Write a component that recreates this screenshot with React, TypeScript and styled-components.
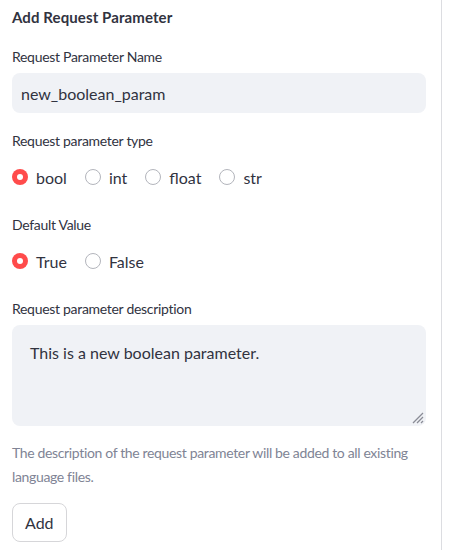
import styled, { createGlobalStyle } from 'styled-components';

const GlobalStyle = createGlobalStyle`
  html, body {
    margin: 0;
    padding: 0;
    background: #ffffff;
  }
  body {
    font-family: Lato, "Noto Sans", "Liberation Sans", sans-serif;
    color: #31333f;
  }
`;

interface RadioOption {
  label: string;
  checked?: boolean;
}

const typeOptions: RadioOption[] = [
  { label: 'bool', checked: true },
  { label: 'int' },
  { label: 'float' },
  { label: 'str' },
];

const defaultOptions: RadioOption[] = [{ label: 'True', checked: true }, { label: 'False' }];

function RadioGroup({ options }: { options: RadioOption[] }) {
  return (
    <RadioRow>
      {options.map((option) => (
        <RadioItem key={option.label}>
          <RadioDot checked={!!option.checked} />
          <span>{option.label}</span>
        </RadioItem>
      ))}
    </RadioRow>
  );
}

export default function App() {
  return (
    <>
      <GlobalStyle />
      <Panel>
        <Title>Add Request Parameter</Title>

        <Label $top={18}>Request Parameter Name</Label>
        <TextInput>new_boolean_param</TextInput>

        <Label $top={18}>Request parameter type</Label>
        <RadioGroup options={typeOptions} />

        <Label $top={26}>Default Value</Label>
        <RadioGroup options={defaultOptions} />

        <Label $top={26}>Request parameter description</Label>
        <TextArea>
          This is a new boolean parameter.
          <ResizeHandle width="14" height="14" viewBox="0 0 14 14">
            <path d="M13 3 L3 13 M13 7 L7 13 M13 11 L11 13" stroke="#8a8c96" strokeWidth="1.3" />
          </ResizeHandle>
        </TextArea>

        <HelpText>
          The description of the request parameter will be added to all existing language files.
        </HelpText>

        <AddButton>Add</AddButton>
      </Panel>
    </>
  );
}

const Panel = styled.div`
  display: flex;
  flex-direction: column;
  align-items: flex-start;
  width: 442px;
  min-height: 550px;
  box-sizing: border-box;
  padding: 5px 15px 0 12px;
  border-right: 1px solid #dcdde1;
`;

const Title = styled.div`
  font-size: 15px;
  font-weight: 700;
  line-height: 24px;
  letter-spacing: 0.1px;
`;

const Label = styled.div<{ $top: number }>`
  margin-top: ${({ $top }) => $top}px;
  font-size: 14px;
  line-height: 20px;
  letter-spacing: -0.3px;
`;

const TextInput = styled.div`
  margin-top: 6px;
  width: 100%;
  height: 40px;
  box-sizing: border-box;
  padding: 0 9px;
  display: flex;
  align-items: center;
  background: #f0f2f6;
  border-radius: 8px;
  font-size: 16px;
`;

const RadioRow = styled.div`
  margin-top: 14px;
  display: flex;
  align-items: center;
  gap: 18px;
  height: 24px;
`;

const RadioItem = styled.label`
  display: flex;
  align-items: center;
  gap: 8px;
  font-size: 16px;
`;

const RadioDot = styled.span<{ checked: boolean }>`
  width: 16px;
  height: 16px;
  border-radius: 50%;
  box-sizing: border-box;
  position: relative;
  border: ${({ checked }) => (checked ? 'none' : '1px solid #b3b5bc')};
  background: ${({ checked }) => (checked ? '#ff4b4b' : '#ffffff')};

  &::after {
    content: '';
    display: ${({ checked }) => (checked ? 'block' : 'none')};
    position: absolute;
    left: 5px;
    top: 5px;
    width: 6px;
    height: 6px;
    border-radius: 50%;
    background: #ffffff;
  }
`;

const TextArea = styled.div`
  position: relative;
  margin-top: 6px;
  width: 100%;
  height: 101px;
  box-sizing: border-box;
  padding: 16px 18px;
  background: #f0f2f6;
  border-radius: 8px;
  font-size: 16px;
  line-height: 24px;
`;

const ResizeHandle = styled.svg`
  position: absolute;
  right: 2px;
  bottom: 2px;
`;

const HelpText = styled.div`
  margin-top: 15px;
  font-size: 14px;
  line-height: 24px;
  letter-spacing: -0.35px;
  color: #808495;
`;

const AddButton = styled.button`
  margin-top: 14px;
  height: 39px;
  padding: 0 12px;
  background: #ffffff;
  border: 1px solid #d6d6d9;
  border-radius: 8px;
  font-family: inherit;
  font-size: 16px;
  color: #31333f;
`;
